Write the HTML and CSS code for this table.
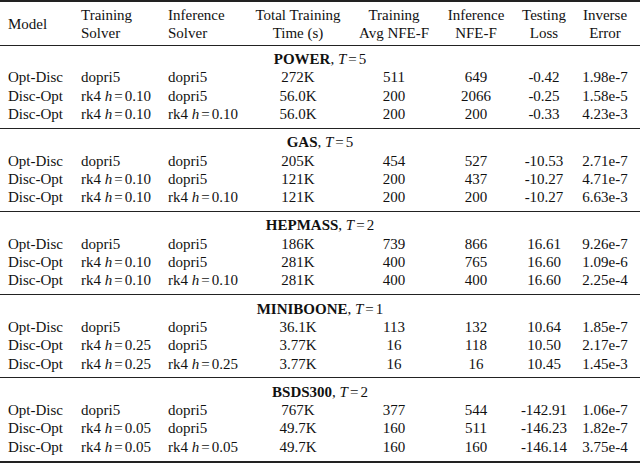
FILE: index.html
```html
<!DOCTYPE html>
<html lang="en">
<head>
<meta charset="utf-8">
<title>Results table</title>
<link rel="stylesheet" href="styles.css">
</head>
<body>
<table class="results">
  <colgroup>
    <col class="c-model">
    <col class="c-tsolver">
    <col class="c-isolver">
    <col class="c-time">
    <col class="c-tnfe">
    <col class="c-infe">
    <col class="c-loss">
    <col class="c-err">
  </colgroup>
  <thead>
    <tr>
      <th class="l first">Model</th>
      <th class="l second">Training<br>Solver</th>
      <th class="l third">Inference<br>Solver</th>
      <th>Total Training<br>Time (s)</th>
      <th>Training<br>Avg NFE-F</th>
      <th>Inference<br>NFE-F</th>
      <th>Testing<br>Loss</th>
      <th class="last">Inverse<br>Error</th>
    </tr>
  </thead>
  <tbody>
    <tr class="title"><td colspan="8"><b>POWER</b>, <i>T</i><span class="eq">=</span>5</td></tr>
    <tr><td class="l first">Opt-Disc</td><td class="l second">dopri5</td><td class="l third">dopri5</td><td>272K</td><td>511</td><td>649</td><td>-0.42</td><td class="last">1.98e-7</td></tr>
    <tr><td class="l first">Disc-Opt</td><td class="l second">rk4 <i>h</i><span class="eq">=</span>0.10</td><td class="l third">dopri5</td><td>56.0K</td><td>200</td><td>2066</td><td>-0.25</td><td class="last">1.58e-5</td></tr>
    <tr class="end"><td class="l first">Disc-Opt</td><td class="l second">rk4 <i>h</i><span class="eq">=</span>0.10</td><td class="l third">rk4 <i>h</i><span class="eq">=</span>0.10</td><td>56.0K</td><td>200</td><td>200</td><td>-0.33</td><td class="last">4.23e-3</td></tr>
  </tbody>
  <tbody>
    <tr class="title"><td colspan="8"><b>GAS</b>, <i>T</i><span class="eq">=</span>5</td></tr>
    <tr><td class="l first">Opt-Disc</td><td class="l second">dopri5</td><td class="l third">dopri5</td><td>205K</td><td>454</td><td>527</td><td>-10.53</td><td class="last">2.71e-7</td></tr>
    <tr><td class="l first">Disc-Opt</td><td class="l second">rk4 <i>h</i><span class="eq">=</span>0.10</td><td class="l third">dopri5</td><td>121K</td><td>200</td><td>437</td><td>-10.27</td><td class="last">4.71e-7</td></tr>
    <tr class="end"><td class="l first">Disc-Opt</td><td class="l second">rk4 <i>h</i><span class="eq">=</span>0.10</td><td class="l third">rk4 <i>h</i><span class="eq">=</span>0.10</td><td>121K</td><td>200</td><td>200</td><td>-10.27</td><td class="last">6.63e-3</td></tr>
  </tbody>
  <tbody>
    <tr class="title"><td colspan="8"><b>HEPMASS</b>, <i>T</i><span class="eq">=</span>2</td></tr>
    <tr><td class="l first">Opt-Disc</td><td class="l second">dopri5</td><td class="l third">dopri5</td><td>186K</td><td>739</td><td>866</td><td>16.61</td><td class="last">9.26e-7</td></tr>
    <tr><td class="l first">Disc-Opt</td><td class="l second">rk4 <i>h</i><span class="eq">=</span>0.10</td><td class="l third">dopri5</td><td>281K</td><td>400</td><td>765</td><td>16.60</td><td class="last">1.09e-6</td></tr>
    <tr class="end"><td class="l first">Disc-Opt</td><td class="l second">rk4 <i>h</i><span class="eq">=</span>0.10</td><td class="l third">rk4 <i>h</i><span class="eq">=</span>0.10</td><td>281K</td><td>400</td><td>400</td><td>16.60</td><td class="last">2.25e-4</td></tr>
  </tbody>
  <tbody>
    <tr class="title"><td colspan="8"><b>MINIBOONE</b>, <i>T</i><span class="eq">=</span>1</td></tr>
    <tr><td class="l first">Opt-Disc</td><td class="l second">dopri5</td><td class="l third">dopri5</td><td>36.1K</td><td>113</td><td>132</td><td>10.64</td><td class="last">1.85e-7</td></tr>
    <tr><td class="l first">Disc-Opt</td><td class="l second">rk4 <i>h</i><span class="eq">=</span>0.25</td><td class="l third">dopri5</td><td>3.77K</td><td>16</td><td>118</td><td>10.50</td><td class="last">2.17e-7</td></tr>
    <tr class="end"><td class="l first">Disc-Opt</td><td class="l second">rk4 <i>h</i><span class="eq">=</span>0.25</td><td class="l third">rk4 <i>h</i><span class="eq">=</span>0.25</td><td>3.77K</td><td>16</td><td>16</td><td>10.45</td><td class="last">1.45e-3</td></tr>
  </tbody>
  <tbody class="final">
    <tr class="title"><td colspan="8"><b>BSDS300</b>, <i>T</i><span class="eq">=</span>2</td></tr>
    <tr><td class="l first">Opt-Disc</td><td class="l second">dopri5</td><td class="l third">dopri5</td><td>767K</td><td>377</td><td>544</td><td>-142.91</td><td class="last">1.06e-7</td></tr>
    <tr><td class="l first">Disc-Opt</td><td class="l second">rk4 <i>h</i><span class="eq">=</span>0.05</td><td class="l third">dopri5</td><td>49.7K</td><td>160</td><td>511</td><td>-146.23</td><td class="last">1.82e-7</td></tr>
    <tr class="end"><td class="l first">Disc-Opt</td><td class="l second">rk4 <i>h</i><span class="eq">=</span>0.05</td><td class="l third">rk4 <i>h</i><span class="eq">=</span>0.05</td><td>49.7K</td><td>160</td><td>160</td><td>-146.14</td><td class="last">3.75e-4</td></tr>
  </tbody>
</table>
</body>
</html>
```

FILE: styles.css
```css
html, body {
  margin: 0;
  padding: 0;
  background: #ffffff;
}

body {
  font-family: "Liberation Serif", "Times New Roman", serif;
  font-size: 15px;
  color: #111111;
}

.results {
  width: 640px;
  border-collapse: collapse;
  table-layout: fixed;
  border-top: 2px solid #222222;
  border-bottom: 2px solid #222222;
}

.c-model { width: 74px; }
.c-tsolver { width: 86px; }
.c-isolver { width: 88px; }
.c-time { width: 100px; }
.c-tnfe { width: 92px; }
.c-infe { width: 72px; }
.c-loss { width: 64px; }
.c-err { width: 64px; }

.results th,
.results td {
  padding: 0;
  line-height: 18.3px;
  text-align: center;
  white-space: nowrap;
  font-weight: normal;
}

.results th {
  padding-top: 4px;
  padding-bottom: 2px;
  vertical-align: middle;
}

.results .l { text-align: left; }
.results .first { padding-left: 8px; }
.results .second { padding-left: 7px; }
.results .third { padding-left: 8px; }
.results .last { padding-right: 6px; }

.results tbody {
  border-top: 1px solid #222222;
}

.results .title td {
  padding-top: 4.5px;
}

.results .end td {
  padding-bottom: 4.5px;
}

.results b { font-weight: bold; }

.eq {
  margin: 0 2px;
}
```
